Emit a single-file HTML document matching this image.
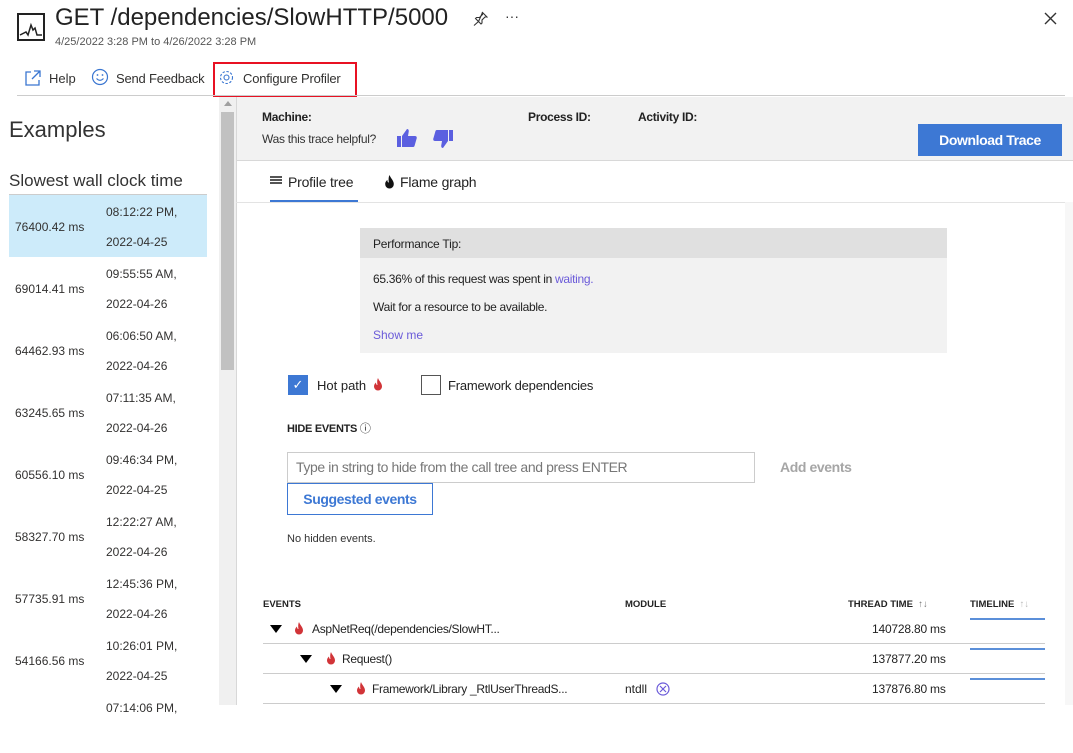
<!DOCTYPE html>
<html><head><meta charset="utf-8"><style>
*{margin:0;padding:0;box-sizing:border-box}
body{width:1073px;height:705px;overflow:hidden;background:#fff;font-family:"Liberation Sans",sans-serif;color:#323130;position:relative}
.a{position:absolute;white-space:nowrap}
.row{position:absolute;left:9px;width:198px;height:62px;font-size:12px}
.row .ms{position:absolute;left:6px;top:25px}
.row .t1{position:absolute;left:97px;top:10px}
.row .t2{position:absolute;left:97px;top:40px}
.tri{display:inline-block;width:0;height:0;border-left:6px solid transparent;border-right:6px solid transparent;border-top:8px solid #000}
.tl{position:absolute;left:970px;width:75px;height:2px;background:#5b8fd9}
</style></head><body>
<svg width="0" height="0" style="position:absolute"><defs><symbol id="fl" viewBox="0 0 10 13"><path d="M5 0C6 3 9 5 9 8.5A4 4 0 0 1 1 8.5C1 6.5 2 5.5 3 4.5C3 6 3.5 7 4.5 7C4 5 4 2 5 0Z" fill="#d13438"/></symbol></defs></svg>
<svg class="a" style="left:17px;top:13px" width="29" height="29" viewBox="0 0 29 29"><rect x="1" y="1" width="26" height="26" fill="none" stroke="#222" stroke-width="2"/><polyline points="3,22 9,19 11,22 14,12 16,17 18,15 20,22 25,22" fill="none" stroke="#222" stroke-width="1.5"/></svg>
<div class="a" style="left:55px;top:4px;font-size:24px;color:#222">GET /dependencies/SlowHTTP/5000</div>
<div class="a" style="left:55px;top:36px;font-size:11px;color:#555">4/25/2022 3:28 PM to 4/26/2022 3:28 PM</div>
<svg class="a" style="left:473px;top:11px" width="15" height="15" viewBox="0 0 15 15"><path d="M9 1l5 5-2 0-3 3 0 3-1 1-2.5-2.5L1 14.5M5.5 10.5L2.5 7.5l1-1 3 0 3-3 0-2z" fill="none" stroke="#333" stroke-width="1.1"/></svg>
<div class="a" style="left:505px;top:8px;font-size:14px;color:#333">···</div>
<svg class="a" style="left:1044px;top:12px" width="13" height="13" viewBox="0 0 13 13"><path d="M1 1L12 12M12 1L1 12" stroke="#333" stroke-width="1.4"/></svg>
<svg class="a" style="left:24px;top:69px" width="18" height="18" viewBox="0 0 18 18"><path d="M7 3H2v13h13v-5M10 2h6v6M16 2L8 10" fill="none" stroke="#3a76d1" stroke-width="1.3"/></svg>
<div class="a" style="left:49px;top:71px;font-size:13px">Help</div>
<svg class="a" style="left:91px;top:68px" width="18" height="18" viewBox="0 0 18 18"><circle cx="9" cy="9" r="7.5" fill="none" stroke="#3a76d1" stroke-width="1.2"/><circle cx="6.5" cy="7" r=".9" fill="#3a76d1"/><circle cx="11.5" cy="7" r=".9" fill="#3a76d1"/><path d="M5.5 10.5q3.5 3.5 7 0" fill="none" stroke="#3a76d1" stroke-width="1.1"/></svg>
<div class="a" style="left:116px;top:71px;font-size:13px;letter-spacing:-0.2px">Send Feedback</div>
<div class="a" style="left:213px;top:62px;width:144px;height:35px;border:2px solid #e81123"></div>
<svg class="a" style="left:218px;top:69px" width="17" height="17" viewBox="0 0 17 17"><circle cx="8.5" cy="8.5" r="2.5" fill="none" stroke="#3a76d1" stroke-width="1.1"/><circle cx="8.5" cy="8.5" r="6" fill="none" stroke="#3a76d1" stroke-width="1.1" stroke-dasharray="2.4 1.6"/></svg>
<div class="a" style="left:243px;top:71px;font-size:13px;letter-spacing:-0.2px">Configure Profiler</div>
<div class="a" style="left:17px;top:95px;width:1048px;height:1px;background:#ccc"></div>
<div class="a" style="left:9px;top:117px;font-size:22px;color:#333">Examples</div>
<div class="a" style="left:9px;top:171px;font-size:17px;color:#333">Slowest wall clock time</div>
<div class="a" style="left:9px;top:194px;width:198px;height:1px;background:#ccc"></div>
<div class="row" style="top:195px;background:#cdebfa"><span class="ms">76400.42 ms</span><span class="t1">08:12:22 PM,</span><span class="t2">2022-04-25</span></div>
<div class="row" style="top:257px"><span class="ms">69014.41 ms</span><span class="t1">09:55:55 AM,</span><span class="t2">2022-04-26</span></div>
<div class="row" style="top:319px"><span class="ms">64462.93 ms</span><span class="t1">06:06:50 AM,</span><span class="t2">2022-04-26</span></div>
<div class="row" style="top:381px"><span class="ms">63245.65 ms</span><span class="t1">07:11:35 AM,</span><span class="t2">2022-04-26</span></div>
<div class="row" style="top:443px"><span class="ms">60556.10 ms</span><span class="t1">09:46:34 PM,</span><span class="t2">2022-04-25</span></div>
<div class="row" style="top:505px"><span class="ms">58327.70 ms</span><span class="t1">12:22:27 AM,</span><span class="t2">2022-04-26</span></div>
<div class="row" style="top:567px"><span class="ms">57735.91 ms</span><span class="t1">12:45:36 PM,</span><span class="t2">2022-04-26</span></div>
<div class="row" style="top:629px"><span class="ms">54166.56 ms</span><span class="t1">10:26:01 PM,</span><span class="t2">2022-04-25</span></div>
<div class="row" style="top:691px"><span class="t1">07:14:06 PM,</span></div>
<div class="a" style="left:219px;top:97px;width:17px;height:608px;background:#f0f0f0"></div>
<div class="a" style="left:224px;top:101px;width:0;height:0;border-left:4px solid transparent;border-right:4px solid transparent;border-bottom:5px solid #a0a0a0"></div>
<div class="a" style="left:221px;top:112px;width:13px;height:258px;background:#c1c1c1"></div>
<div class="a" style="left:236px;top:97px;width:837px;height:64px;background:#f2f2f2;border-bottom:1px solid #d8d8d8"></div>
<div class="a" style="left:236px;top:97px;width:1px;height:608px;background:#d8d8d8"></div>
<div class="a" style="left:262px;top:110px;font-size:12px;font-weight:bold;color:#222;letter-spacing:-0.3px">Machine:</div>
<div class="a" style="left:528px;top:110px;font-size:12px;font-weight:bold;color:#222;letter-spacing:-0.3px">Process ID:</div>
<div class="a" style="left:638px;top:110px;font-size:12px;font-weight:bold;color:#222;letter-spacing:-0.3px">Activity ID:</div>
<div class="a" style="left:262px;top:132px;font-size:12px;color:#333;letter-spacing:-0.3px">Was this trace helpful?</div>
<svg class="a" style="left:396px;top:128px" width="22" height="20" viewBox="0 0 22 20"><path d="M1 8h4v11H1zM6 8l5-7c2 0 2 2 1.5 4L12 8h7c2 0 2 2 1.5 3l-2 7c-.5 1-1 1-2 1H6z" fill="#5b5fe0"/></svg>
<svg class="a" style="left:432px;top:129px" width="22" height="20" viewBox="0 0 22 20"><g transform="rotate(180 11 10)"><path d="M1 8h4v11H1zM6 8l5-7c2 0 2 2 1.5 4L12 8h7c2 0 2 2 1.5 3l-2 7c-.5 1-1 1-2 1H6z" fill="#5b5fe0"/></g></svg>
<div class="a" style="left:918px;top:124px;width:144px;height:32px;background:#3d78d4;color:#fff;font-size:14px;font-weight:bold;text-align:center;line-height:32px;letter-spacing:-0.4px">Download Trace</div>
<div class="a" style="left:270px;top:176px;width:12px;height:1.5px;background:#555;box-shadow:0 3px 0 #555,0 6px 0 #555"></div>
<div class="a" style="left:288px;top:174px;font-size:14px;color:#222;letter-spacing:-0.2px">Profile tree</div>
<div class="a" style="left:270px;top:200px;width:88px;height:2px;background:#3d78d4"></div>
<svg class="a" style="left:384px;top:175px" width="11" height="14" viewBox="0 0 10 13"><path d="M5 0C6 3 9 5 9 8.5A4 4 0 0 1 1 8.5C1 6.5 2 5.5 3 4.5C3 6 3.5 7 4.5 7C4 5 4 2 5 0Z" fill="#111"/></svg>
<div class="a" style="left:400px;top:174px;font-size:14px;color:#222;letter-spacing:-0.2px">Flame graph</div>
<div class="a" style="left:236px;top:202px;width:829px;height:1px;background:#e3e3e3"></div>
<div class="a" style="left:1065px;top:202px;width:8px;height:503px;background:#f7f7f7"></div>
<div class="a" style="left:360px;top:228px;width:587px;height:125px;background:#f2f2f2"></div>
<div class="a" style="left:360px;top:228px;width:587px;height:30px;background:#e0e0e0"></div>
<div class="a" style="left:373px;top:237px;font-size:12px;color:#222;letter-spacing:-0.2px">Performance Tip:</div>
<div class="a" style="left:373px;top:272px;font-size:12px;color:#222;letter-spacing:-0.3px">65.36% of this request was spent in <span style="color:#6b5bd9">waiting.</span></div>
<div class="a" style="left:373px;top:300px;font-size:12px;color:#222;letter-spacing:-0.3px">Wait for a resource to be available.</div>
<div class="a" style="left:373px;top:328px;font-size:12px;color:#6b5bd9">Show me</div>
<div class="a" style="left:288px;top:375px;width:20px;height:20px;background:#3d78d4;color:#fff;font-size:13px;text-align:center;line-height:20px">✓</div>
<div class="a" style="left:317px;top:378px;font-size:13px;color:#222">Hot path</div>
<svg class="a" style="left:373px;top:378px" width="10" height="13"><use href="#fl"/></svg>
<div class="a" style="left:421px;top:375px;width:20px;height:20px;border:1px solid #555"></div>
<div class="a" style="left:448px;top:378px;font-size:13px;color:#222;letter-spacing:-0.2px">Framework dependencies</div>
<div class="a" style="left:287px;top:420px;font-size:11px;font-weight:bold;color:#222;letter-spacing:-0.3px">HIDE EVENTS <span style="font-weight:normal">ⓘ</span></div>
<div class="a" style="left:287px;top:452px;width:468px;height:31px;border:1px solid #ccc"></div>
<div class="a" style="left:296px;top:459px;font-size:14px;color:#777;letter-spacing:-0.4px">Type in string to hide from the call tree and press ENTER</div>
<div class="a" style="left:780px;top:459px;font-size:14px;color:#a6a6a6;font-weight:bold;letter-spacing:-0.4px">Add events</div>
<div class="a" style="left:287px;top:483px;width:146px;height:32px;border:1px solid #3d78d4;color:#3d78d4;font-size:14px;font-weight:bold;text-align:center;line-height:30px;letter-spacing:-0.4px">Suggested events</div>
<div class="a" style="left:287px;top:533px;font-size:11px;color:#333">No hidden events.</div>
<div class="a" style="left:263px;top:599px;font-size:9.5px;font-weight:bold;color:#222">EVENTS</div>
<div class="a" style="left:625px;top:599px;font-size:9.5px;font-weight:bold;color:#222">MODULE</div>
<div class="a" style="left:848px;top:599px;font-size:9.5px;font-weight:bold;color:#222">THREAD TIME <span style="font-weight:normal;color:#777">&nbsp;↑↓</span></div>
<div class="a" style="left:970px;top:599px;font-size:9.5px;font-weight:bold;color:#222">TIMELINE <span style="font-weight:normal;color:#bbb">&nbsp;↑↓</span></div>
<div class="tl" style="top:618px"></div><div class="tl" style="top:648px"></div><div class="tl" style="top:678px"></div>
<div class="a" style="left:263px;top:643px;width:782px;height:1px;background:#ccc"></div>
<div class="a" style="left:263px;top:673px;width:782px;height:1px;background:#ccc"></div>
<div class="a" style="left:263px;top:703px;width:782px;height:1px;background:#ccc"></div>
<div class="a" style="left:270px;top:625px"><span class="tri" style="display:block"></span></div>
<svg class="a" style="left:294px;top:622px" width="10" height="13"><use href="#fl"/></svg>
<div class="a" style="left:312px;top:622px;font-size:12px;color:#222;letter-spacing:-0.3px">AspNetReq(/dependencies/SlowHT...</div>
<div class="a" style="left:300px;top:655px"><span class="tri" style="display:block"></span></div>
<svg class="a" style="left:326px;top:652px" width="10" height="13"><use href="#fl"/></svg>
<div class="a" style="left:342px;top:652px;font-size:12px;color:#222;letter-spacing:-0.3px">Request()</div>
<div class="a" style="left:330px;top:685px"><span class="tri" style="display:block"></span></div>
<svg class="a" style="left:356px;top:682px" width="10" height="13"><use href="#fl"/></svg>
<div class="a" style="left:372px;top:682px;font-size:12px;color:#222;letter-spacing:-0.3px">Framework/Library _RtlUserThreadS...</div>
<div class="a" style="left:625px;top:682px;font-size:12px;color:#222">ntdll</div>
<svg class="a" style="left:656px;top:682px" width="14" height="14" viewBox="0 0 14 14"><circle cx="7" cy="7" r="6" fill="none" stroke="#6b5bd9" stroke-width="1.2"/><path d="M4 4L10 10M10 4L4 10" stroke="#6b5bd9" stroke-width="1.2"/></svg>
<div class="a" style="left:872px;top:622px;font-size:12px;color:#222;letter-spacing:-0.2px">140728.80 ms</div>
<div class="a" style="left:872px;top:652px;font-size:12px;color:#222;letter-spacing:-0.2px">137877.20 ms</div>
<div class="a" style="left:872px;top:682px;font-size:12px;color:#222;letter-spacing:-0.2px">137876.80 ms</div>
</body></html>
